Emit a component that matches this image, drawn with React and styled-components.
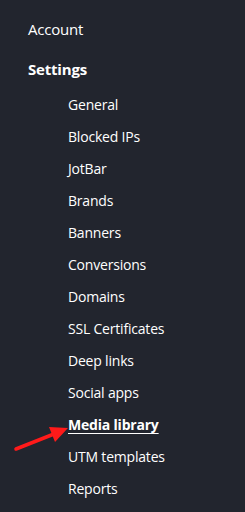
import React from 'react';
import styled, { createGlobalStyle } from 'styled-components';

const Global = createGlobalStyle`
  html, body {
    margin: 0;
    padding: 0;
    background: #22252e;
  }
  body {
    font-family: 'Open Sans', 'Liberation Sans', sans-serif;
  }
`;

const Sidebar = styled.nav`
  position: relative;
  width: 245px;
  height: 512px;
  background: #22252e;
  padding: 13px 0 0 28px;
  box-sizing: border-box;
  overflow: hidden;
`;

const TopItem = styled.div`
  color: #ffffff;
  font-size: 15px;
  line-height: 32px;
  letter-spacing: -0.2px;
  font-weight: ${(p) => (p.$bold ? 700 : 400)};
  margin-top: ${(p) => p.$gap || 0}px;
`;

const SubList = styled.ul`
  list-style: none;
  margin: 4px 0 0;
  padding: 0 0 0 40px;
`;

const SubItem = styled.li`
  color: #ffffff;
  font-size: 14px;
  line-height: 32px;
  letter-spacing: -0.2px;
  font-weight: ${(p) => (p.$active ? 700 : 400)};
  text-decoration: ${(p) => (p.$active ? 'underline' : 'none')};
  text-underline-offset: 3px;
  text-decoration-thickness: 1px;
`;

const Arrow = styled.svg`
  position: absolute;
  left: 12px;
  top: 419px;
`;

const items = [
  'General',
  'Blocked IPs',
  'JotBar',
  'Brands',
  'Banners',
  'Conversions',
  'Domains',
  'SSL Certificates',
  'Deep links',
  'Social apps',
  'Media library',
  'UTM templates',
  'Reports',
];

export default function App() {
  return (
    <>
      <Global />
      <Sidebar>
        <TopItem>Account</TopItem>
        <TopItem $bold $gap={8}>Settings</TopItem>
        <SubList>
          {items.map((name) => (
            <SubItem key={name} $active={name === 'Media library'}>
              {name}
            </SubItem>
          ))}
        </SubList>
        <Arrow width="60" height="36" viewBox="0 0 60 36">
          <line x1="4" y1="30" x2="42" y2="15" stroke="#ff1a1a" strokeWidth="3.5" strokeLinecap="round" />
          <polygon points="56,9 37,8 43,23" fill="#ff1a1a" />
        </Arrow>
      </Sidebar>
    </>
  );
}
